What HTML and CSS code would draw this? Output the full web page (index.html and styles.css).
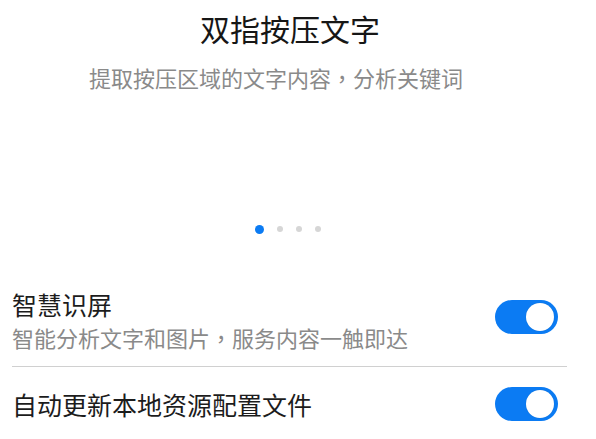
FILE: index.html
```html
<!DOCTYPE html>
<html lang="zh-CN">
<head>
    <meta charset="UTF-8">
    <meta name="viewport" content="width=device-width, initial-scale=1.0">
    <title>智慧识屏</title>
    <link rel="stylesheet" href="styles.css">
</head>
<body>
    <div class="intro">
        <h1 class="intro-title">双指按压文字</h1>
        <p class="intro-desc">提取按压区域的文字内容<span class="punct" lang="zh-TW">，</span>分析关键词</p>
    </div>

    <div class="dots">
        <span class="dot active"></span>
        <span class="dot"></span>
        <span class="dot"></span>
        <span class="dot"></span>
    </div>

    <div class="settings">
        <div class="setting-row">
            <div class="setting-text">
                <div class="setting-title">智慧识屏</div>
                <div class="setting-sub">智能分析文字和图片<span class="punct" lang="zh-TW">，</span>服务内容一触即达</div>
            </div>
            <div class="switch on"><span class="knob"></span></div>
        </div>
        <div class="setting-row">
            <div class="setting-text">
                <div class="setting-title">自动更新本地资源配置文件</div>
            </div>
            <div class="switch on"><span class="knob"></span></div>
        </div>
    </div>
</body>
</html>
```

FILE: styles.css
```css
:root {
    --main-blue: #0b7bf3;
    --font-color: #1c1c1c;
    --font-color-sub: #8a8a8a;
    --line-color: #d0d0d0;
}

body {
    margin: 0;
    background-color: #fff;
    color: var(--font-color);
    font-family: "Noto Sans CJK SC", "Noto Sans", sans-serif;
    overflow: hidden;
}

/* centered full-width comma, as in the reference */
.punct {
    font-family: "Noto Sans CJK TC", sans-serif;
}

.intro {
    padding-top: 8px;
}

.intro-title {
    margin: 0;
    padding-right: 16px;
    font-size: 30px;
    line-height: 40px;
    font-weight: 400;
    text-align: center;
    color: #161616;
}

.intro-desc {
    margin: 14px 0 0;
    padding-right: 44px;
    font-size: 22px;
    line-height: 30px;
    text-align: center;
    color: var(--font-color-sub);
}

.dots {
    display: flex;
    justify-content: center;
    align-items: center;
    gap: 13px;
    height: 10px;
    margin-top: 132px;
    padding-right: 20px;
}

.dot {
    width: 6px;
    height: 6px;
    border-radius: 50%;
    background-color: #d6d6d6;
}

.dot.active {
    width: 9px;
    height: 9px;
    background-color: var(--main-blue);
}

.settings {
    margin: 42px 29px 0 12px;
}

.setting-row {
    display: flex;
    align-items: center;
    justify-content: space-between;
    min-height: 54px;
    padding: 12px 0;
}

.setting-row + .setting-row {
    border-top: 1px solid var(--line-color);
    padding-top: 10px;
}

.setting-row:first-child .switch {
    margin-bottom: 8px;
}

.setting-title {
    font-size: 25px;
    line-height: 32px;
    color: var(--font-color);
}

.setting-sub {
    font-size: 22px;
    line-height: 34px;
    color: var(--font-color-sub);
}

.switch {
    display: flex;
    align-items: center;
    justify-content: flex-end;
    box-sizing: border-box;
    width: 63px;
    height: 34px;
    margin-right: 9px;
    padding: 0 4px;
    border-radius: 17px;
    background-color: var(--main-blue);
}

.knob {
    width: 28px;
    height: 28px;
    border-radius: 50%;
    background-color: #fff;
    box-shadow: 0 0 1px rgba(0, 0, 0, 0.2);
}
```
